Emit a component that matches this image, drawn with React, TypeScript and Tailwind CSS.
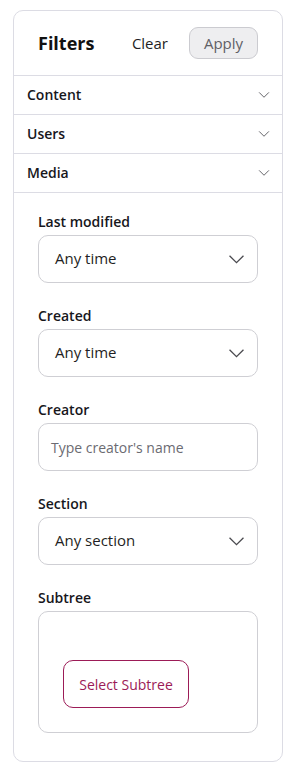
import React from "react";

const Chevron = ({ className }: { className?: string }) => (
  <svg viewBox="0 0 14 8" className={className} fill="none" stroke="currentColor" strokeWidth="1.2">
    <path d="M0.5 0.5 L7 7 L13.5 0.5" />
  </svg>
);

const SelectBox = ({ value }: { value: string }) => (
  <div className="h-[48px] rounded-[10px] border border-[#cfcfd4] flex items-center justify-between pl-[16px] pr-[13px]">
    <span className="text-[15px] text-[#1f1f24] -mt-[2px]">{value}</span>
    <Chevron className="w-[15px] h-[9px] text-[#4a4a4f]" />
  </div>
);

const Field = ({ label, children }: { label: string; children: React.ReactNode }) => (
  <div className="flex flex-col">
    <div className="text-[14px] font-semibold text-[#17171c] leading-[20px] mb-[3px]">{label}</div>
    {children}
  </div>
);

const AccRow = ({ label }: { label: string }) => (
  <div className="h-[39px] border-b border-[#dcdce4] flex items-center justify-between pl-[13px] pr-[12px]">
    <span className="text-[14px] font-semibold text-[#17171c] -mt-[2px]">{label}</span>
    <Chevron className="w-[12px] h-[6px] text-[#55555a]" />
  </div>
);

export default function App() {
  return (
    <div className="w-[296px] h-[776px] bg-white pt-[10px] pl-[13px]" style={{ fontFamily: '"Open Sans", "Noto Sans", sans-serif' }}>
      <div className="w-[270px] h-[752px] border border-[#dcdce4] rounded-[10px] flex flex-col">
        <div className="h-[65px] border-b border-[#dcdce4] flex items-center pl-[24px] pr-[24px]">
          <span className="text-[18px] font-bold text-[#111] mr-auto">Filters</span>
          <span className="text-[15px] text-[#1f1f24] mr-[21px]">Clear</span>
          <div className="w-[69px] h-[32px] rounded-[9px] bg-[#eeeef0] border border-[#cbcbd0] flex items-center justify-center text-[15px] text-[#606066]">
            Apply
          </div>
        </div>
        <AccRow label="Content" />
        <AccRow label="Users" />
        <AccRow label="Media" />
        <div className="flex flex-col gap-[23px] pt-[19px] px-[24px]">
          <Field label="Last modified">
            <SelectBox value="Any time" />
          </Field>
          <Field label="Created">
            <SelectBox value="Any time" />
          </Field>
          <Field label="Creator">
            <div className="h-[48px] rounded-[10px] border border-[#cfcfd4] flex items-center pl-[12px]">
              <span className="text-[14px] text-[#6b6b72]">Type creator's name</span>
            </div>
          </Field>
          <Field label="Section">
            <SelectBox value="Any section" />
          </Field>
          <Field label="Subtree">
            <div className="h-[122px] rounded-[10px] border border-[#cfcfd4] flex items-start pl-[24px] pt-[48px]">
              <div className="w-[126px] h-[48px] rounded-[10px] border border-[#9c1b57] flex items-center justify-center text-[14px] text-[#9c1b57]">
                Select Subtree
              </div>
            </div>
          </Field>
        </div>
      </div>
    </div>
  );
}
